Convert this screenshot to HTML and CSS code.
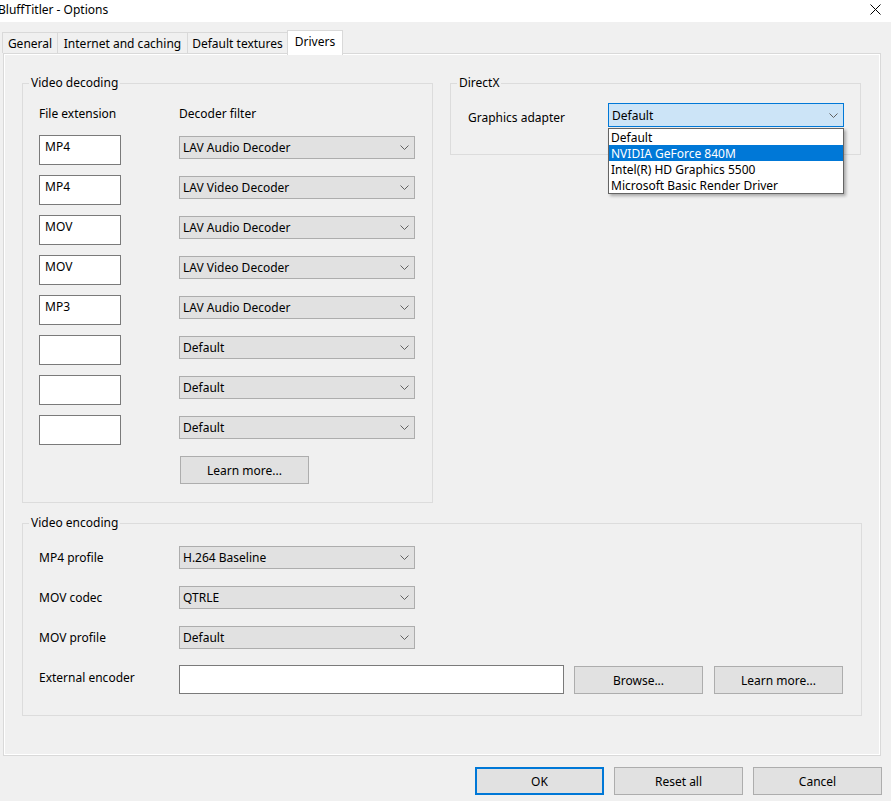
FILE: index.html
```html
<!DOCTYPE html>
<html lang="en">
<head>
    <meta charset="UTF-8">
    <title>BluffTitler - Options</title>
    <link rel="stylesheet" href="styles.css">
</head>
<body>
    <div class="titlebar">
        <span class="title">BluffTitler - Options</span>
        <svg class="close" width="11" height="11" viewBox="0 0 11 11">
            <path d="M0.5 0.5 L10.5 10.5 M10.5 0.5 L0.5 10.5" stroke="#000" stroke-width="1" fill="none"/>
        </svg>
    </div>

    <div class="tabs">
        <div class="tab tab-general">General</div>
        <div class="tab tab-internet">Internet and caching</div>
        <div class="tab tab-textures">Default textures</div>
        <div class="tab tab-drivers active">Drivers</div>
    </div>

    <div class="panel">
        <div class="top-row">
            <fieldset class="group decoding">
                <legend>Video decoding</legend>
                <div class="dec-head">
                    <span class="col-ext">File extension</span>
                    <span>Decoder filter</span>
                </div>
                <div class="dec-rows">
                    <div class="dec-row"><div class="textbox ext">MP4</div><div class="combo"><span>LAV Audio Decoder</span><svg width="9" height="5" viewBox="0 0 9 5"><path d="M0.5 0.5 L4.5 4.5 L8.5 0.5" stroke="#606060" fill="none"/></svg></div></div>
                    <div class="dec-row"><div class="textbox ext">MP4</div><div class="combo"><span>LAV Video Decoder</span><svg width="9" height="5" viewBox="0 0 9 5"><path d="M0.5 0.5 L4.5 4.5 L8.5 0.5" stroke="#606060" fill="none"/></svg></div></div>
                    <div class="dec-row"><div class="textbox ext">MOV</div><div class="combo"><span>LAV Audio Decoder</span><svg width="9" height="5" viewBox="0 0 9 5"><path d="M0.5 0.5 L4.5 4.5 L8.5 0.5" stroke="#606060" fill="none"/></svg></div></div>
                    <div class="dec-row"><div class="textbox ext">MOV</div><div class="combo"><span>LAV Video Decoder</span><svg width="9" height="5" viewBox="0 0 9 5"><path d="M0.5 0.5 L4.5 4.5 L8.5 0.5" stroke="#606060" fill="none"/></svg></div></div>
                    <div class="dec-row"><div class="textbox ext">MP3</div><div class="combo"><span>LAV Audio Decoder</span><svg width="9" height="5" viewBox="0 0 9 5"><path d="M0.5 0.5 L4.5 4.5 L8.5 0.5" stroke="#606060" fill="none"/></svg></div></div>
                    <div class="dec-row"><div class="textbox ext"></div><div class="combo"><span>Default</span><svg width="9" height="5" viewBox="0 0 9 5"><path d="M0.5 0.5 L4.5 4.5 L8.5 0.5" stroke="#606060" fill="none"/></svg></div></div>
                    <div class="dec-row"><div class="textbox ext"></div><div class="combo"><span>Default</span><svg width="9" height="5" viewBox="0 0 9 5"><path d="M0.5 0.5 L4.5 4.5 L8.5 0.5" stroke="#606060" fill="none"/></svg></div></div>
                    <div class="dec-row"><div class="textbox ext"></div><div class="combo"><span>Default</span><svg width="9" height="5" viewBox="0 0 9 5"><path d="M0.5 0.5 L4.5 4.5 L8.5 0.5" stroke="#606060" fill="none"/></svg></div></div>
                </div>
                <div class="btn dec-learn">Learn more...</div>
            </fieldset>

            <fieldset class="group directx">
                <legend>DirectX</legend>
                <div class="dx-row">
                    <span class="dx-label">Graphics adapter</span>
                    <div class="dx-combo-wrap">
                        <div class="combo combo-focus"><span>Default</span><svg width="9" height="5" viewBox="0 0 9 5"><path d="M0.5 0.5 L4.5 4.5 L8.5 0.5" stroke="#606060" fill="none"/></svg></div>
                        <ul class="droplist">
                            <li>Default</li>
                            <li class="selected">NVIDIA GeForce 840M</li>
                            <li>Intel(R) HD Graphics 5500</li>
                            <li>Microsoft Basic Render Driver</li>
                        </ul>
                    </div>
                </div>
            </fieldset>
        </div>

        <fieldset class="group encoding">
            <legend>Video encoding</legend>
            <div class="enc-row">
                <span class="enc-label">MP4 profile</span>
                <div class="combo"><span>H.264 Baseline</span><svg width="9" height="5" viewBox="0 0 9 5"><path d="M0.5 0.5 L4.5 4.5 L8.5 0.5" stroke="#606060" fill="none"/></svg></div>
            </div>
            <div class="enc-row">
                <span class="enc-label">MOV codec</span>
                <div class="combo"><span>QTRLE</span><svg width="9" height="5" viewBox="0 0 9 5"><path d="M0.5 0.5 L4.5 4.5 L8.5 0.5" stroke="#606060" fill="none"/></svg></div>
            </div>
            <div class="enc-row">
                <span class="enc-label">MOV profile</span>
                <div class="combo"><span>Default</span><svg width="9" height="5" viewBox="0 0 9 5"><path d="M0.5 0.5 L4.5 4.5 L8.5 0.5" stroke="#606060" fill="none"/></svg></div>
            </div>
            <div class="enc-row ext-row">
                <span class="enc-label ext-label">External encoder</span>
                <div class="textbox ext-path"></div>
                <div class="btn browse">Browse...</div>
                <div class="btn enc-learn">Learn more...</div>
            </div>
        </fieldset>
    </div>

    <div class="dialog-buttons">
        <div class="btn btn-default">OK</div>
        <div class="btn">Reset all</div>
        <div class="btn">Cancel</div>
    </div>
</body>
</html>
```

FILE: styles.css
```css
* {
    box-sizing: border-box;
}
body {
    margin: 0;
    width: 891px;
    height: 801px;
    overflow: hidden;
    background: #f0f0f0;
    color: #000;
    font-family: "Noto Sans", "Open Sans", sans-serif;
    font-size: 12px;
    line-height: 16px;
}

/* title bar */
.titlebar {
    height: 22px;
    background: #fff;
    display: flex;
    align-items: center;
    justify-content: space-between;
}
.title {
    margin-left: -2px;
    margin-top: -2px;
}
.close {
    margin-right: 10px;
    margin-top: -4px;
}

/* tabs */
.tabs {
    display: flex;
    height: 23px;
    margin-top: 8px;
    padding-left: 2px;
}
.tab {
    height: 21px;
    margin-top: 2px;
    margin-left: -1px;
    border: 1px solid #d9d9d9;
    border-bottom: none;
    background: #f0f0f0;
    text-align: center;
    line-height: 21px;
}
.tab-general { margin-left: 0; width: 56px; }
.tab-internet { width: 131px; }
.tab-textures { width: 101px; }
.tab-drivers { width: 56px; }
.tab.active {
    position: relative;
    z-index: 1;
    height: 25px;
    margin-top: 0;
    background: #fff;
    line-height: 22px;
}

/* tab panel */
.panel {
    margin-left: 3px;
    width: 878px;
    height: 703px;
    border: 1px solid #d9d9d9;
    box-shadow: inset 1px 1px 0 #fff, inset -1px -1px 0 #fff;
    padding: 21px 0 0 18px;
}
.top-row {
    display: flex;
    align-items: flex-start;
    gap: 17px;
}

/* group boxes */
.group {
    margin: 0;
    padding: 0 16px;
    border: 1px solid #dcdcdc;
    min-width: 0;
}
.group legend {
    margin-left: -10px;
    padding: 0 2px;
    line-height: 16px;
}

.decoding {
    width: 411px;
    padding-bottom: 18px;
}
.dec-head {
    display: flex;
    margin-top: 15px;
    margin-bottom: 13px;
}
.col-ext {
    width: 140px;
}
.dec-rows {
    display: flex;
    flex-direction: column;
    gap: 10px;
}
.dec-row {
    display: flex;
    align-items: flex-start;
    gap: 58px;
    height: 30px;
}

.textbox {
    background: #fff;
    border: 1px solid #7a7a7a;
}
.textbox.ext {
    width: 82px;
    height: 30px;
    padding: 3px 5px;
}

.combo {
    display: flex;
    align-items: center;
    justify-content: space-between;
    width: 236px;
    height: 23px;
    margin-top: 1px;
    padding: 0 5px 0 3px;
    background: #e1e1e1;
    border: 1px solid #adadad;
}
.combo span {
    padding-top: 1px;
}

.btn {
    width: 129px;
    height: 28px;
    background: #e1e1e1;
    border: 1px solid #adadad;
    text-align: center;
    line-height: 27px;
}
.dec-learn {
    margin-top: 11px;
    margin-left: 141px;
}

/* DirectX */
.directx {
    width: 411px;
    padding: 0 0 26px 17px;
}
.directx legend {
    margin-left: -11px;
}
.dx-row {
    display: flex;
    margin-top: 12px;
}
.dx-label {
    width: 140px;
    padding-top: 5px;
    line-height: 20px;
}
.dx-combo-wrap {
    position: relative;
}
.combo-focus {
    height: 24px;
    margin-top: 0;
    background: #cce4f7;
    border-color: #0078d7;
    padding-left: 3px;
}
.droplist {
    position: absolute;
    top: 100%;
    left: 0;
    width: 236px;
    margin: 0;
    padding: 0;
    list-style: none;
    background: #fff;
    border: 1px solid #646464;
    box-shadow: 2px 2px 3px rgba(0, 0, 0, 0.3);
    z-index: 2;
}
.droplist li {
    height: 16px;
    padding: 1px 0 0 2px;
    line-height: 15px;
}
.droplist li.selected {
    background: #0078d7;
    color: #fff;
}

/* encoding */
.encoding {
    width: 840px;
    margin-top: 12px;
    padding-top: 15px;
    padding-bottom: 21px;
}
.enc-row {
    display: flex;
    align-items: flex-start;
    margin-bottom: 17px;
}
.enc-row .combo {
    margin-top: 0;
}
.enc-label {
    width: 140px;
    height: 23px;
    padding-top: 1px;
    line-height: 22px;
}
.ext-row {
    margin-top: -1px;
    margin-bottom: 0;
}
.ext-label {
    height: 25px;
    line-height: 24px;
}
.ext-path {
    width: 385px;
    height: 29px;
}
.browse {
    margin-top: 1px;
    margin-left: 10px;
}
.enc-learn {
    margin-top: 1px;
    margin-left: 11px;
}

/* dialog buttons */
.dialog-buttons {
    display: flex;
    justify-content: flex-end;
    gap: 10px;
    margin-top: 11px;
    padding-right: 9px;
}
.btn-default {
    border: 2px solid #0078d7;
    line-height: 25px;
}
```
